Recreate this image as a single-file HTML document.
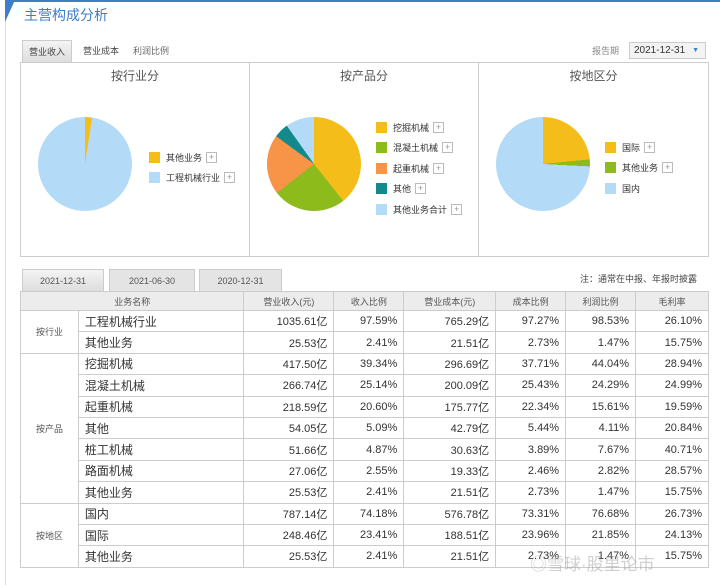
<!DOCTYPE html>
<html><head><meta charset="utf-8"><style>
*{margin:0;padding:0;box-sizing:border-box}
body{width:720px;height:585px;background:#fff;font-family:"Liberation Sans","Noto Sans CJK SC",sans-serif;position:relative;overflow:hidden;color:#333}
.abs{position:absolute}
.topline{left:5px;top:0;width:715px;height:2px;background:#3d7fc6}
.corner{left:5px;top:0;width:0;height:0;border-top:22px solid #3d7fc6;border-right:10px solid transparent}
.leftb{left:5px;top:0;width:1px;height:585px;background:#ddd}
.title{left:24px;top:5px;font-size:14px;color:#3d7fc6}
.tab{top:40px;height:22px;font-size:9px;line-height:22px;text-align:center;color:#444}
.box{left:20px;top:62px;width:689px;height:195px;border:1px solid #ccc}
.panel{top:0;height:193px;border-right:1px solid #ccc}
.ph{position:absolute;top:4px;width:100%;text-align:center;font-size:12px;color:#555}
.pie{position:absolute;width:94px;height:94px;border-radius:50%}
.leg{position:absolute;font-size:9px;color:#333}
.leg div{height:20.5px;display:flex;align-items:center}
.leg i{display:inline-block;width:11px;height:11px;margin-right:6px}
.leg b{display:inline-block;width:11px;height:11px;border:1px solid #bbb;margin-left:4px;font-weight:normal;font-size:9px;line-height:9px;text-align:center;color:#999}
.sel{left:629px;top:42px;width:77px;height:17px;border:1px solid #ccc;background:#f3f3f3;font-size:10px;line-height:15px;padding-left:4px}
table{position:absolute;left:20px;top:291px;border-collapse:collapse;width:689px;font-size:11px}
td{border:1px solid #ccc;height:21.4px;padding:0 6px;text-align:right}
tr.h td{background:#ececec;text-align:center;font-size:9px;color:#555;height:19px}
td.g{text-align:center;font-size:9px;color:#555}
td.n{text-align:left;font-size:12px}
.dtab{top:269px;height:22px;font-size:9px;line-height:22px;text-align:center;background:#e4e4e4;border:1px solid #ccc;border-bottom:none;color:#555}
</style></head><body>
<div class="abs leftb"></div>
<div class="abs topline"></div>
<div class="abs corner"></div>
<div class="abs title">主营构成分析</div>
<div class="abs tab" style="left:22px;width:50px;background:linear-gradient(#f4f4f4,#ddd);border:1px solid #ccc;border-bottom:none">营业收入</div>
<div class="abs tab" style="left:76px;width:50px">营业成本</div>
<div class="abs tab" style="left:126px;width:50px;color:#666">利润比例</div>
<div class="abs" style="left:592px;top:44px;font-size:9px;color:#888">报告期</div>
<div class="abs sel">2021-12-31<span style="position:absolute;right:6px;color:#3d7fc6;font-size:7px">▼</span></div>
<div class="abs box">
 <div class="abs panel" style="left:0;width:229px"><div class="ph">按行业分</div>
  <div class="pie" style="left:17px;top:54px;background:conic-gradient(#f5bd1a 0 2.41%,#b3daf7 2.41% 100%)"></div>
  <div class="leg" style="left:128px;top:84px"><div><i style="background:#f5bd1a"></i>其他业务<b>+</b></div><div><i style="background:#b3daf7"></i>工程机械行业<b>+</b></div></div>
 </div>
 <div class="abs panel" style="left:229px;width:229px"><div class="ph">按产品分</div>
  <div class="pie" style="left:17px;top:54px;background:conic-gradient(#f5bd1a 0 39.34%,#8cbb1b 39.34% 64.48%,#f79448 64.48% 85.08%,#13898b 85.08% 90.17%,#b3daf7 90.17% 100%)"></div>
  <div class="leg" style="left:126px;top:54px"><div><i style="background:#f5bd1a"></i>挖掘机械<b>+</b></div><div><i style="background:#8cbb1b"></i>混凝土机械<b>+</b></div><div><i style="background:#f79448"></i>起重机械<b>+</b></div><div><i style="background:#13898b"></i>其他<b>+</b></div><div><i style="background:#b3daf7"></i>其他业务合计<b>+</b></div></div>
 </div>
 <div class="abs panel" style="left:458px;width:229px;border-right:none"><div class="ph">按地区分</div>
  <div class="pie" style="left:17px;top:54px;background:conic-gradient(#f5bd1a 0 23.41%,#8cbb1b 23.41% 25.82%,#b3daf7 25.82% 100%)"></div>
  <div class="leg" style="left:126px;top:74px"><div><i style="background:#f5bd1a"></i>国际<b>+</b></div><div><i style="background:#8cbb1b"></i>其他业务<b>+</b></div><div><i style="background:#b3daf7"></i>国内</div></div>
 </div>
</div>
<div class="abs dtab" style="left:22px;width:82px;background:linear-gradient(#f4f4f4,#ddd)">2021-12-31</div>
<div class="abs dtab" style="left:109px;width:86px">2021-06-30</div>
<div class="abs dtab" style="left:199px;width:83px">2020-12-31</div>
<div class="abs" style="left:580px;top:272px;font-size:9px;color:#444">注：通常在中报、年报时披露</div>
<table>
<colgroup><col style="width:58px"><col style="width:166px"><col style="width:90px"><col style="width:70px"><col style="width:92px"><col style="width:70px"><col style="width:70px"><col style="width:73px"></colgroup>
<tr class="h"><td colspan="2">业务名称</td><td>营业收入(元)</td><td>收入比例</td><td>营业成本(元)</td><td>成本比例</td><td>利润比例</td><td>毛利率</td></tr>
<tr><td class="g" rowspan="2">按行业</td><td class="n">工程机械行业</td><td>1035.61亿</td><td>97.59%</td><td>765.29亿</td><td>97.27%</td><td>98.53%</td><td>26.10%</td></tr>
<tr><td class="n">其他业务</td><td>25.53亿</td><td>2.41%</td><td>21.51亿</td><td>2.73%</td><td>1.47%</td><td>15.75%</td></tr>
<tr><td class="g" rowspan="7">按产品</td><td class="n">挖掘机械</td><td>417.50亿</td><td>39.34%</td><td>296.69亿</td><td>37.71%</td><td>44.04%</td><td>28.94%</td></tr>
<tr><td class="n">混凝土机械</td><td>266.74亿</td><td>25.14%</td><td>200.09亿</td><td>25.43%</td><td>24.29%</td><td>24.99%</td></tr>
<tr><td class="n">起重机械</td><td>218.59亿</td><td>20.60%</td><td>175.77亿</td><td>22.34%</td><td>15.61%</td><td>19.59%</td></tr>
<tr><td class="n">其他</td><td>54.05亿</td><td>5.09%</td><td>42.79亿</td><td>5.44%</td><td>4.11%</td><td>20.84%</td></tr>
<tr><td class="n">桩工机械</td><td>51.66亿</td><td>4.87%</td><td>30.63亿</td><td>3.89%</td><td>7.67%</td><td>40.71%</td></tr>
<tr><td class="n">路面机械</td><td>27.06亿</td><td>2.55%</td><td>19.33亿</td><td>2.46%</td><td>2.82%</td><td>28.57%</td></tr>
<tr><td class="n">其他业务</td><td>25.53亿</td><td>2.41%</td><td>21.51亿</td><td>2.73%</td><td>1.47%</td><td>15.75%</td></tr>
<tr><td class="g" rowspan="3">按地区</td><td class="n">国内</td><td>787.14亿</td><td>74.18%</td><td>576.78亿</td><td>73.31%</td><td>76.68%</td><td>26.73%</td></tr>
<tr><td class="n">国际</td><td>248.46亿</td><td>23.41%</td><td>188.51亿</td><td>23.96%</td><td>21.85%</td><td>24.13%</td></tr>
<tr><td class="n">其他业务</td><td>25.53亿</td><td>2.41%</td><td>21.51亿</td><td>2.73%</td><td>1.47%</td><td>15.75%</td></tr>
</table>
<div class="abs" style="left:530px;top:550px;font-size:17px;color:rgba(150,150,150,0.45)">◎雪球·股里论市</div>
</body></html>
